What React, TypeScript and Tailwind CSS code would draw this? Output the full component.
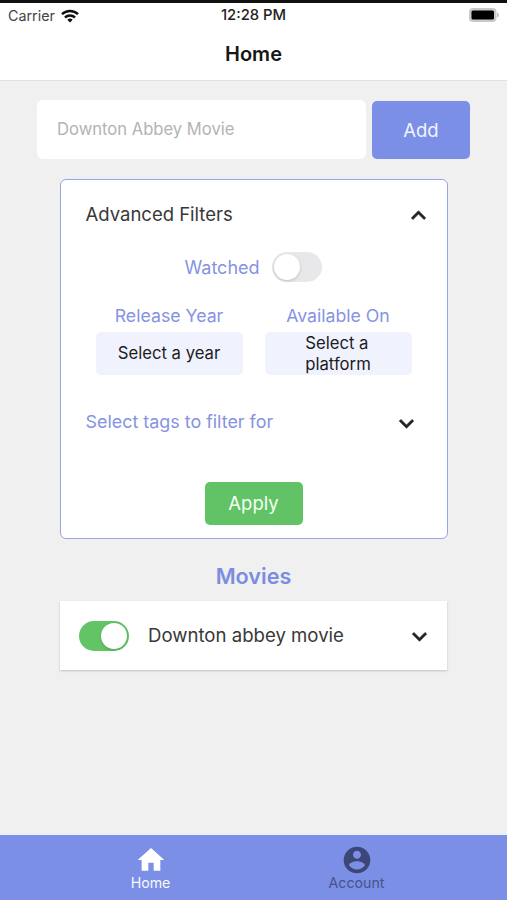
import type { ReactNode } from "react";

const tabs = [
  {
    label: "Home",
    active: true,
    path: "M10 20v-6h4v6h5v-8h3L12 3 2 12h3v8z",
  },
  {
    label: "Account",
    active: false,
    path: "M12 2C6.48 2 2 6.48 2 12s4.48 10 10 10 10-4.48 10-10S17.52 2 12 2zm0 3c1.66 0 3 1.34 3 3s-1.34 3-3 3-3-1.34-3-3 1.34-3 3-3zm0 14.2c-2.5 0-4.71-1.28-6-3.22.03-1.99 4-3.08 6-3.08 1.99 0 5.97 1.09 6 3.08-1.29 1.94-3.5 3.22-6 3.22z",
  },
];

function Chevron({ up = false }: { up?: boolean }) {
  return (
    <svg
      viewBox="0 0 24 24"
      className="mt-[2px] size-[29px] shrink-0 fill-[#222] stroke-[#222]"
      strokeWidth="0.5"
      strokeLinejoin="round"
    >
      <path
        d={
          up
            ? "M7.41 15.41 12 10.83l4.59 4.58L18 14l-6-6-6 6z"
            : "M7.41 8.59 12 13.17l4.59-4.58L18 10l-6 6-6-6z"
        }
      />
    </svg>
  );
}

function Toggle({ on = false }: { on?: boolean }) {
  return (
    <button
      role="switch"
      aria-checked={on}
      className={
        on
          ? "flex h-[30px] w-[50px] shrink-0 items-center justify-end rounded-full bg-[#63c466] p-[2px]"
          : "flex h-[30px] w-[50px] shrink-0 items-center justify-start rounded-full bg-[#e8e8ea] p-[2px]"
      }
    >
      <span className="size-[26px] rounded-full bg-white shadow-[0_1px_3px_rgba(0,0,0,0.18)]" />
    </button>
  );
}

function Picker({ label, children }: { label: string; children: ReactNode }) {
  return (
    <div className="flex w-[147px] flex-col items-center">
      <p className="text-[17.7px] leading-[28px] text-[#8593e4]">{label}</p>
      <button className="mt-[2px] flex h-[43px] w-full items-center justify-center rounded-[5px] bg-[#f0f2fe] text-left text-[16.7px] leading-[21px] text-[#1c1c22]">
        {children}
      </button>
    </div>
  );
}

function StatusBar() {
  return (
    <div className="grid h-[25px] grid-cols-3 items-center px-2 text-[14.3px] text-[#222]">
      <div className="flex items-center gap-[6px]">
        <span className="text-[#444]">Carrier</span>
        <svg viewBox="0 0 18 14" className="h-[14px] w-[18px]" fill="none" stroke="#111" strokeWidth="2.5">
          <path d="M1 5.2a11.4 11.4 0 0 1 16 0" />
          <path d="M4 8.5a7.1 7.1 0 0 1 10 0" />
          <path d="M9 13.4 6.3 10.7a3.9 3.9 0 0 1 5.4 0z" fill="#111" stroke="none" />
        </svg>
      </div>
      <span className="text-center text-[14.8px] font-medium whitespace-nowrap">12:28 PM</span>
      <svg viewBox="0 0 30 14" className="-mt-[2px] h-[14px] w-[30px] justify-self-end">
        <rect x="0" y="0" width="27.5" height="14" rx="4" fill="#c9c9c9" />
        <path d="M28 4.5c2.6 1 2.6 4 0 5z" fill="#c4c4c4" />
        <rect x="2.5" y="2.5" width="22.5" height="9" rx="1.5" fill="#000" />
      </svg>
    </div>
  );
}

export default function App() {
  return (
    <div className="flex h-[900px] w-[507px] flex-col overflow-hidden bg-[#f0f0f0] font-['Inter',sans-serif]">
      <header className="h-[81px] border-t-[3px] border-b border-t-[#111] border-b-[#e0e0e0] bg-white">
        <StatusBar />
        <h1 className="mt-3 text-center text-[20px] leading-7 font-semibold text-[#161616]">Home</h1>
      </header>

      <main className="flex flex-1 flex-col items-center">
        <div className="mt-[19px] flex h-[59px] w-[433px] items-center gap-[6px]">
          <input
            placeholder="Downton Abbey Movie"
            className="h-[59px] w-[329px] rounded-[6px] bg-white px-5 pb-[2px] text-[16.6px] placeholder:text-[#b3b3b3]"
          />
          <button className="h-[58px] w-[98px] rounded-[5px] bg-[#7a8fe5] pt-[2px] text-[18.5px] text-[#f0f3ff]">
            Add
          </button>
        </div>

        <section className="mt-[20px] h-[360px] w-[388px] rounded-[6px] border-[1.5px] border-[#97a5e8] bg-white">
          <div className="mt-[19px] flex items-center justify-between pr-[14px] pl-[25px]">
            <h2 className="text-[18.5px] text-[#383838]">Advanced Filters</h2>
            <Chevron up />
          </div>
          <div className="mt-[22px] flex items-center justify-center gap-3 pr-[1px]">
            <span className="text-[18px] text-[#8593e4]">Watched</span>
            <Toggle />
          </div>
          <div className="mt-5 flex justify-center gap-[22px]">
            <Picker label="Release Year">Select a year</Picker>
            <Picker label="Available On">
              Select a<br />
              platform
            </Picker>
          </div>
          <div className="mt-[32px] flex items-center justify-between pr-[26px] pl-[25px]">
            <span className="text-[17.9px] text-[#8593e4]">Select tags to filter for</span>
            <Chevron />
          </div>
          <button className="mx-auto mt-[44px] block h-[43px] w-[98px] rounded-[5px] bg-[#62c366] text-[18.5px] text-[#f4fff4]">
            Apply
          </button>
        </section>

        <h2 className="mt-[22px] text-[21.6px] leading-[30px] font-semibold text-[#7b8de0]">Movies</h2>
        <div className="mt-[10px] flex h-[69px] w-[387px] items-center bg-white pr-[13px] pl-[19px] shadow-[0_1px_2px_rgba(0,0,0,0.2)]">
          <Toggle on />
          <span className="ml-[19px] flex-1 text-[18.6px] text-[#383838]">Downton abbey movie</span>
          <Chevron />
        </div>
      </main>

      <nav className="flex h-[65px] justify-center bg-[#7a8fe5]">
        {tabs.map((tab) => (
          <a
            key={tab.label}
            className={
              tab.active
                ? "flex w-[206px] flex-col items-center pt-[9px] text-[#f8f9ff]"
                : "flex w-[206px] flex-col items-center pt-[9px] text-[#485389]"
            }
          >
            <svg viewBox="0 0 24 24" className="size-[32px]" fill={tab.active ? "#fff" : "#3c4778"}>
              <path d={tab.path} />
            </svg>
            <span className="text-[14.2px] leading-[14px]">{tab.label}</span>
          </a>
        ))}
      </nav>
    </div>
  );
}
